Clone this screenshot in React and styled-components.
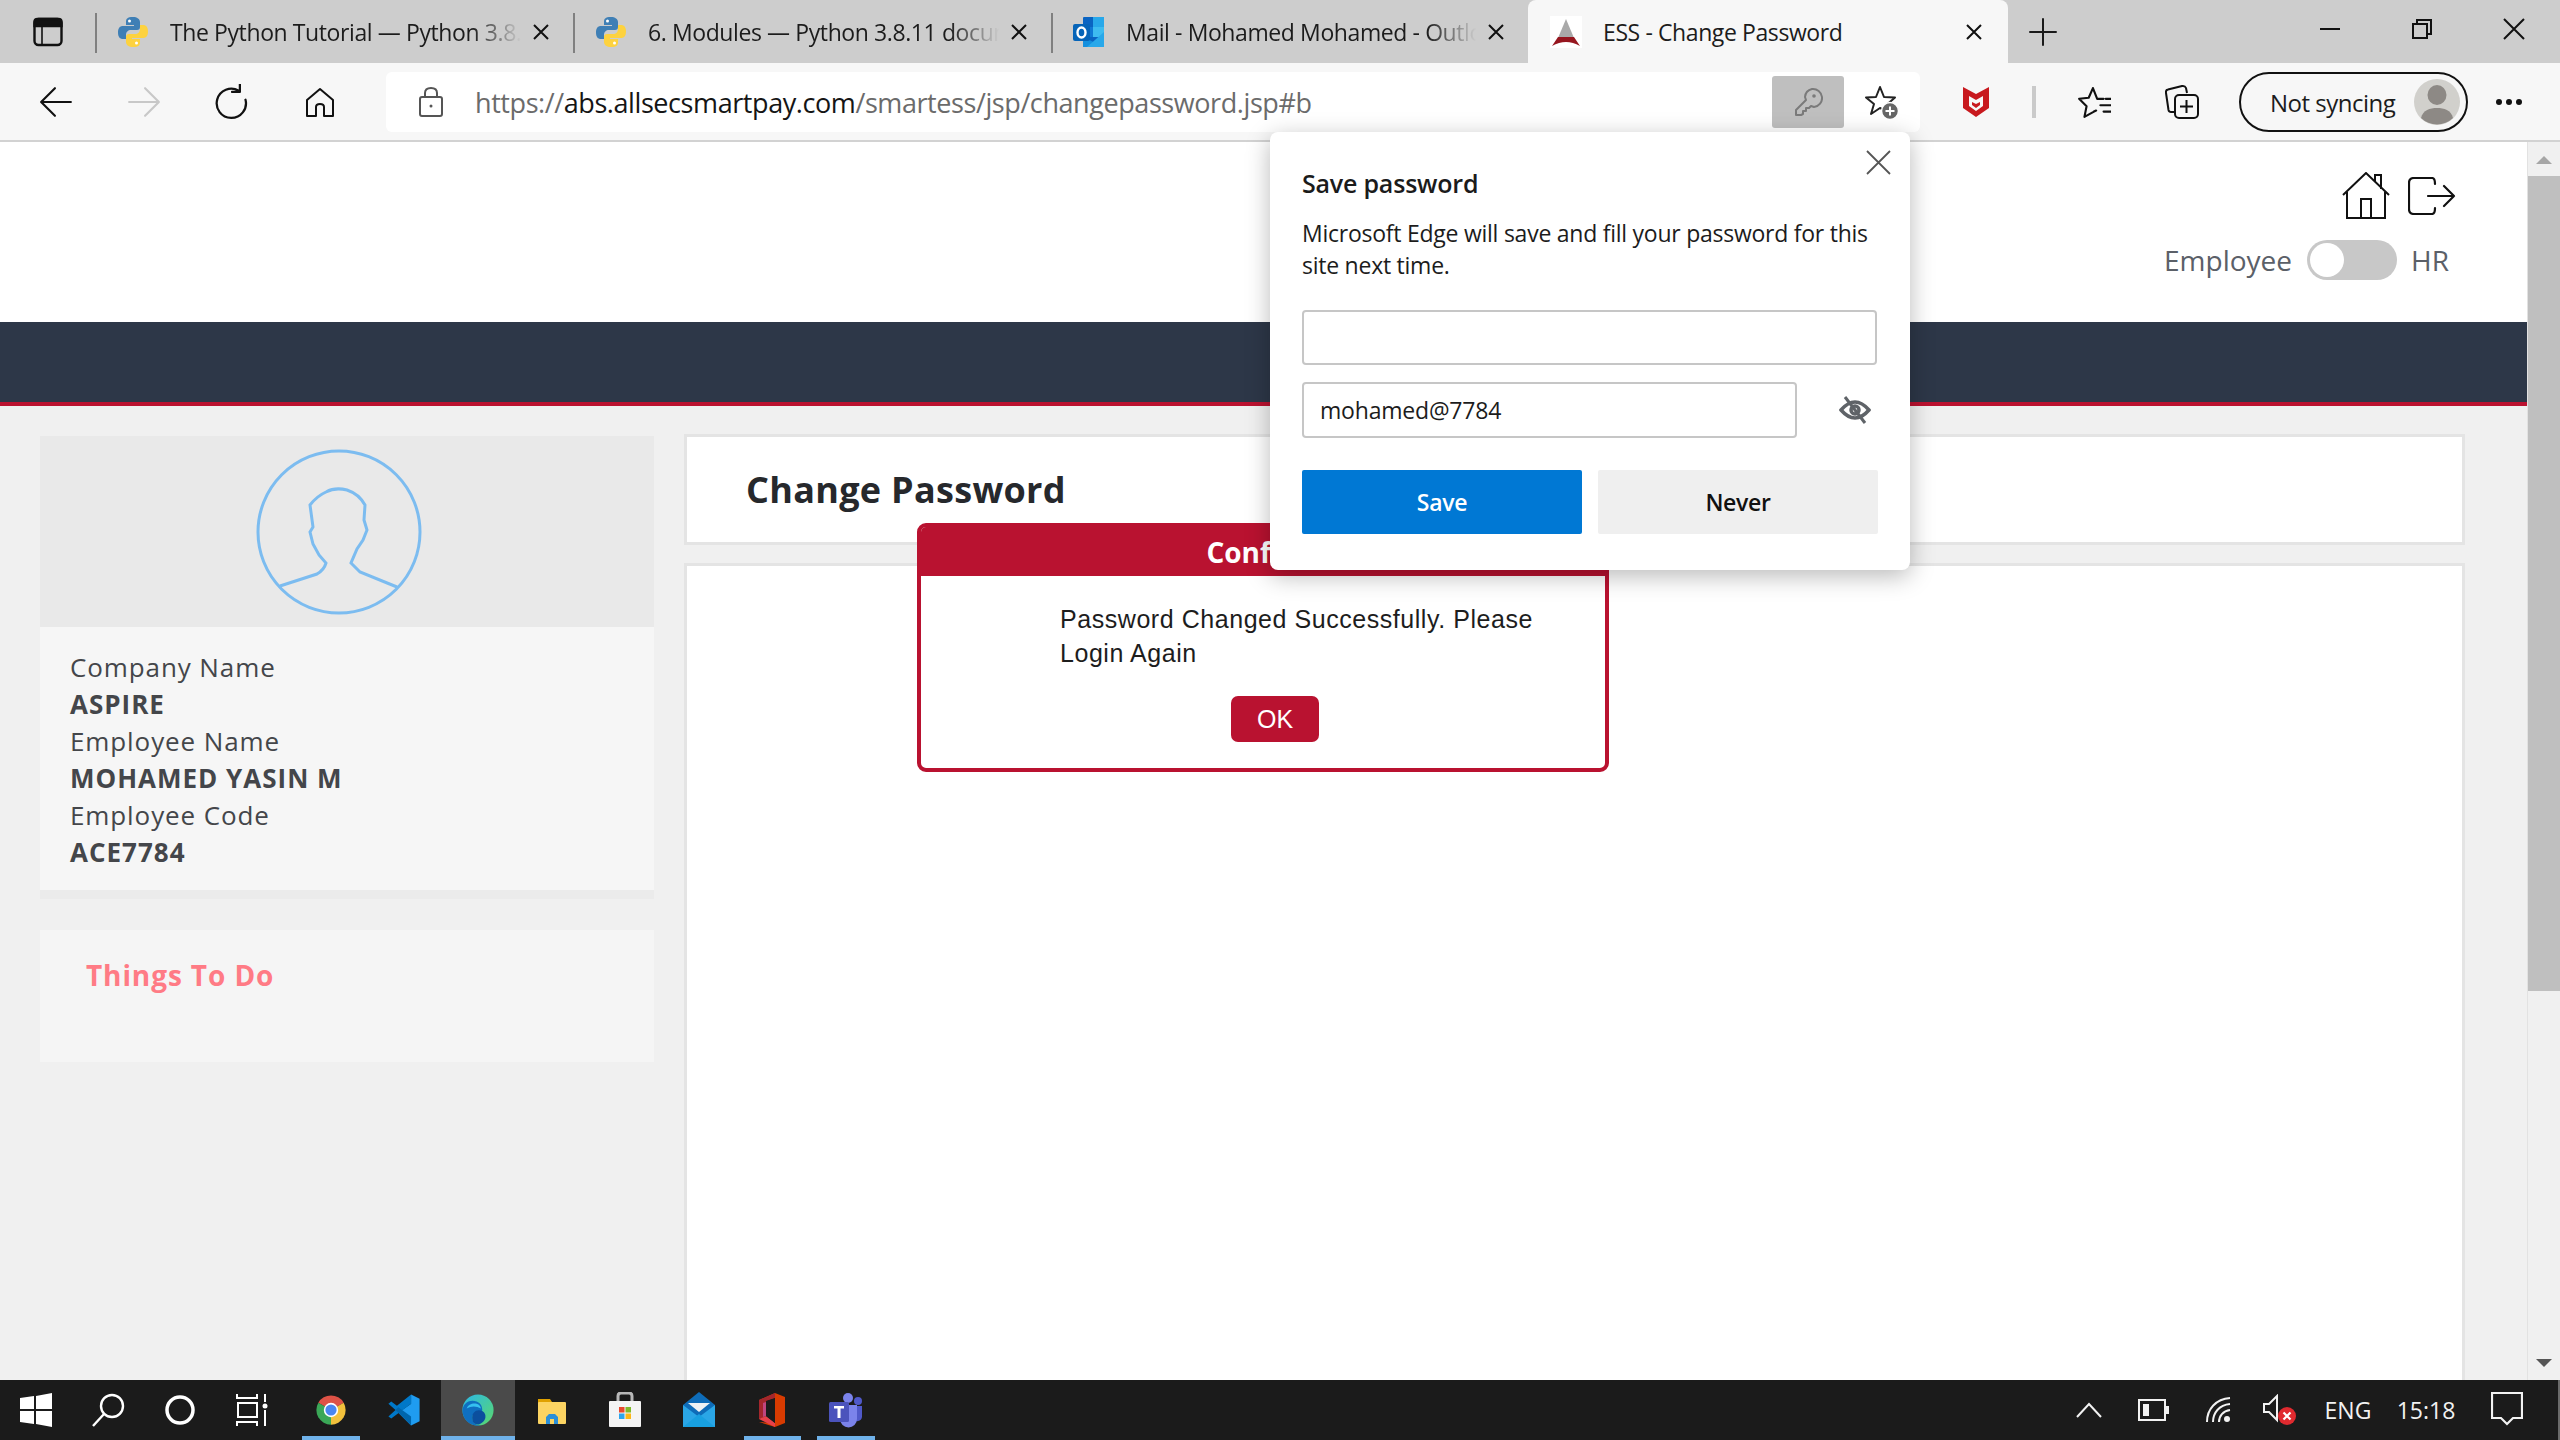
import React from 'react'
import styled, { createGlobalStyle } from 'styled-components'

const Global = createGlobalStyle`
  html, body { margin: 0; padding: 0; overflow: hidden; background: #f0f0f0; }
  * { box-sizing: border-box; }
`

const Screen = styled.div`
  position: relative;
  width: 2560px;
  height: 1440px;
  display: flex;
  flex-direction: column;
  overflow: hidden;
  font-family: "Open Sans", "Liberation Sans", sans-serif;
`

/* ---- browser tabs ---- */
const TabStrip = styled.div`
  height: 63px;
  flex: none;
  display: flex;
  background: #cdcdcd;
`
const SideToggle = styled.div`
  width: 95px;
  display: flex;
  align-items: center;
  padding: 0 0 0 33px;
`
const Divider = styled.div`
  width: 2px;
  height: 40px;
  margin-top: 13px;
  flex: none;
  background: #808080;
`
const Tab = styled.div`
  width: ${p => p.$width}px;
  flex: none;
  display: flex;
  align-items: center;
  padding: 0 ${p => (p.$active ? 26 : 24)}px 0 ${p => (p.$active ? 22 : 20)}px;
  background: ${p => (p.$active ? '#f7f7f7' : 'transparent')};
  border-radius: ${p => (p.$active ? '8px 8px 0 0' : '0')};
`
const Favicon = styled.div`
  width: 32px;
  height: 32px;
  flex: none;
  margin-right: 21px;
  display: flex;
`
const TabTitle = styled.div`
  flex: 1;
  min-width: 0;
  overflow: hidden;
  white-space: nowrap;
  font-size: 23px;
  letter-spacing: -0.4px;
  color: #1c1c1c;
  margin-right: 12px;
  mask-image: ${p => (p.$fade ? 'linear-gradient(to right, #000 86%, transparent 100%)' : 'none')};
`
const TabClose = styled.svg`
  width: 16px;
  height: 16px;
  flex: none;
`
const NewTab = styled.div`
  width: 70px;
  display: flex;
  align-items: center;
  justify-content: center;
`
const WindowButtons = styled.div`
  margin-left: auto;
  display: flex;
  padding-top: 0;
`
const WindowButton = styled.div`
  width: 92px;
  height: 58px;
  display: flex;
  align-items: center;
  justify-content: center;
`

/* ---- toolbar ---- */
const Toolbar = styled.div`
  height: 79px;
  flex: none;
  display: flex;
  align-items: flex-start;
  background: #f7f7f7;
  border-bottom: 2px solid #d2d2d2;
  padding-top: 9px;
`
const ToolSlot = styled.div`
  width: ${p => p.$w}px;
  margin-left: ${p => p.$ml || 0}px;
  height: 60px;
  flex: none;
  display: flex;
  align-items: center;
  justify-content: center;
`
const AddressBar = styled.div`
  width: 1534px;
  height: 60px;
  margin-left: 22px;
  flex: none;
  display: flex;
  align-items: center;
  background: #fff;
  border-radius: 6px;
`
const Lock = styled.div`
  width: 89px;
  flex: none;
  display: flex;
  justify-content: center;
  padding-right: 0;
`
const Url = styled.div`
  flex: 1;
  font-size: 27px;
  letter-spacing: -0.42px;
  color: #6b6b6b;
  white-space: nowrap;
  b { font-weight: 400; color: #151515; }
`
const KeyButton = styled.div`
  width: 72px;
  height: 52px;
  flex: none;
  display: flex;
  align-items: center;
  justify-content: center;
  background: #bfbfbf;
  border-radius: 3px;
`
const StarSlot = styled.div`
  width: 76px;
  flex: none;
  display: flex;
  justify-content: center;
`
const ToolSep = styled.div`
  width: 4px;
  height: 32px;
  margin: 14px 0 0 ${p => p.$ml}px;
  flex: none;
  background: #cacaca;
`
const SyncPill = styled.div`
  width: 229px;
  height: 60px;
  margin-left: 13px;
  flex: none;
  display: flex;
  align-items: center;
  justify-content: space-between;
  padding: 0 6px 0 29px;
  border: 2.5px solid #111;
  border-radius: 30px;
  font-size: 24px;
  letter-spacing: -0.5px;
  color: #1c1c1c;
`
const AvatarDot = styled.div`
  width: 46px;
  height: 46px;
  display: flex;
`

/* ---- page ---- */
const Viewport = styled.div`
  flex: 1;
  min-height: 0;
  display: flex;
`
const Page = styled.div`
  flex: 1;
  min-width: 0;
  display: flex;
  flex-direction: column;
  background: #f0f0f0;
`
const PageHead = styled.div`
  height: 180px;
  flex: none;
  background: #fff;
  display: flex;
  flex-direction: column;
  align-items: flex-end;
`
const HeadIcons = styled.div`
  display: flex;
  align-items: center;
  gap: 18px;
  padding: 30px 71px 0 0;
`
const RoleRow = styled.div`
  display: flex;
  align-items: center;
  padding: 21px 78px 0 0;
  font-size: 28px;
  color: #5b6068;
`
const RoleSwitch = styled.div`
  width: 90px;
  height: 40px;
  margin: 0 14px 0 15px;
  padding: 3px;
  background: #c8c8c8;
  border-radius: 20px;
  &::before {
    content: '';
    display: block;
    width: 34px;
    height: 34px;
    border-radius: 50%;
    background: #fff;
  }
`
const NavBand = styled.div`
  height: 84px;
  flex: none;
  background: #2d3748;
  border-bottom: 4px solid #bb1230;
`
const Content = styled.div`
  position: relative;
  flex: 1;
  min-height: 0;
  display: flex;
  gap: 30px;
  padding: 28px 62px 0 40px;
`
const Sidebar = styled.div`
  width: 614px;
  flex: none;
  margin-top: 2px;
  display: flex;
  flex-direction: column;
`
const PhotoBox = styled.div`
  height: 191px;
  display: flex;
  align-items: center;
  justify-content: center;
  padding-right: 16px;
  background: #e9e9e9;
`
const InfoBox = styled.div`
  height: 272px;
  padding: 22px 30px 0;
  background: #f6f6f6;
  border-bottom: 9px solid #ebebeb;
  color: #44464a;
`
const InfoLabel = styled.div`
  height: 37px;
  line-height: 37px;
  font-size: 26px;
  letter-spacing: 0.9px;
`
const InfoValue = styled(InfoLabel)`
  font-weight: 700;
  letter-spacing: 1px;
`
const TodoBox = styled.div`
  height: 132px;
  margin-top: 31px;
  padding: 25px 46px;
  background: #f5f5f5;
  font-size: 28px;
  line-height: 40px;
  font-weight: 700;
  letter-spacing: 0.9px;
  color: #ff7b85;
`
const MainColumn = styled.div`
  flex: 1;
  min-width: 0;
  display: flex;
  flex-direction: column;
  gap: 18px;
`
const TitlePanel = styled.div`
  height: 111px;
  flex: none;
  display: flex;
  align-items: center;
  padding: 0 0 0 59px;
  background: #fff;
  border: 3px solid #e4e4e4;
`
const PageTitle = styled.h1`
  margin: 0;
  font-size: 36px;
  font-weight: 700;
  letter-spacing: 0.3px;
  color: #26282c;
`
const BodyPanel = styled.div`
  flex: 1;
  background: #fff;
  border: 3px solid #e4e4e4;
  border-bottom: 0;
`

/* ---- site dialog ---- */
const Dialog = styled.div`
  position: absolute;
  left: 917px;
  top: 117px;
  width: 692px;
  height: 249px;
  display: flex;
  flex-direction: column;
  background: #fff;
  border: 4px solid #b91230;
  border-radius: 9px;
  overflow: hidden;
`
const DialogHead = styled.div`
  height: 49px;
  flex: none;
  display: flex;
  align-items: center;
  justify-content: center;
  background: #b91230;
  color: #fff;
  font-size: 28px;
  font-weight: 700;
`
const DialogText = styled.div`
  padding: 26px 60px 0 139px;
  font-family: "Liberation Sans", Arial, sans-serif;
  font-size: 25px;
  line-height: 34px;
  letter-spacing: 0.55px;
  color: #1d1d1d;
`
const DialogOk = styled.div`
  width: 88px;
  height: 46px;
  margin: 26px 0 0 310px;
  display: flex;
  align-items: center;
  justify-content: center;
  background: #b91230;
  border-radius: 7px;
  color: #fff;
  font-family: "Liberation Sans", Arial, sans-serif;
  font-size: 25px;
`

/* ---- save password bubble ---- */
const Bubble = styled.div`
  position: absolute;
  left: 1270px;
  top: 132px;
  width: 640px;
  height: 438px;
  padding: 32px 32px 0;
  background: #fff;
  border-radius: 8px;
  box-shadow: 0 6px 24px rgba(0, 0, 0, 0.28);
  color: #1c1c1c;
`
const BubbleClose = styled.svg`
  position: absolute;
  right: 19px;
  top: 18px;
  width: 25px;
  height: 25px;
`
const BubbleTitle = styled.div`
  font-size: 25px;
  line-height: 38px;
  font-weight: 600;
  letter-spacing: -0.2px;
  color: #1b1b1b;
`
const BubbleText = styled.div`
  margin-top: 15px;
  font-size: 23px;
  line-height: 32px;
  letter-spacing: -0.25px;
`
const FieldRow = styled.div`
  display: flex;
  align-items: center;
  margin-top: ${p => p.$mt}px;
`
const Field = styled.div`
  width: ${p => p.$w}px;
  height: ${p => p.$h}px;
  flex: none;
  display: flex;
  align-items: center;
  padding: 0 16px;
  border: 2px solid #c6c6c6;
  border-radius: 4px;
  font-size: 23px;
  letter-spacing: -0.2px;
`
const EyeSlot = styled.div`
  flex: 1;
  display: flex;
  justify-content: flex-end;
  padding-right: 7px;
`
const BubbleButtons = styled.div`
  display: flex;
  gap: 16px;
  margin-top: 32px;
`
const BubbleButton = styled.div`
  width: 280px;
  height: 64px;
  display: flex;
  align-items: center;
  justify-content: center;
  border-radius: 2px;
  font-size: 23px;
  font-weight: 600;
  letter-spacing: -0.3px;
  background: ${p => (p.$primary ? '#0078d4' : '#efefef')};
  color: ${p => (p.$primary ? '#fff' : '#111')};
`

/* ---- page scrollbar ---- */
const ScrollTrack = styled.div`
  width: 33px;
  flex: none;
  display: flex;
  flex-direction: column;
  align-items: flex-end;
  background: #f0f0f0;
  border-left: 1px solid #e2e2e2;
`
const ScrollArrow = styled.div`
  width: 32px;
  height: ${p => p.$h}px;
  display: flex;
  justify-content: center;
  align-items: ${p => (p.$down ? 'flex-end' : 'flex-start')};
  padding: ${p => (p.$down ? '0 0 13px' : '14px 0 0')};
  margin-top: ${p => (p.$down ? 'auto' : '0')};
  &::before {
    content: '';
    border-left: 8px solid transparent;
    border-right: 8px solid transparent;
    ${p => (p.$down ? 'border-top: 8px solid #555;' : 'border-bottom: 8px solid #a6a6a6;')}
  }
`
const ScrollThumb = styled.div`
  width: 32px;
  height: 815px;
  background: #bfbfbf;
`

/* ---- taskbar ---- */
const Taskbar = styled.div`
  height: 60px;
  flex: none;
  display: flex;
  align-items: stretch;
  background: #1b1b1b;
  color: #f2f2f2;
`
const TaskCell = styled.div`
  position: relative;
  width: ${p => p.$w || 73.6}px;
  flex: none;
  display: flex;
  align-items: center;
  justify-content: center;
  background: ${p => (p.$active ? '#4a4a4a' : 'transparent')};
  ${p => p.$running && `
    &::after {
      content: '';
      position: absolute;
      bottom: 0;
      left: ${p.$active ? 0 : 8}px;
      right: ${p.$active ? 0 : 8}px;
      height: 4px;
      background: #6fb2ea;
    }
  `}
`
const TaskGap = styled.div`
  width: 6px;
  flex: none;
`
const Tray = styled.div`
  margin-left: auto;
  display: flex;
  align-items: center;
`
const TraySlot = styled.div`
  width: ${p => p.$w}px;
  flex: none;
  display: flex;
  align-items: center;
  justify-content: center;
  font-size: 23px;
`
const TrayEdge = styled.div`
  width: 2px;
  height: 60px;
  margin-left: 9px;
  background: #6a6a6a;
`

const Line = ({ d, size = 32, box = 32, color = '#111', width = 2 }) => (
  <svg width={size} height={size} viewBox={`0 0 ${box} ${box}`} fill="none" stroke={color} strokeWidth={width} strokeLinejoin="round" strokeLinecap="round">
    <path d={d} />
  </svg>
)

const PythonIcon = () => (
  <svg width="32" height="32" viewBox="0 0 32 32">
    <path d="M16 1c-6 0-7 2-7 5v3h8v1H6c-3 0-5 2-5 6.500S3 23 6 23h3v-4c0-3 2-5 5-5h6c2 0 3-1 3-3V6c0-3-3-5-7-5z" fill="#3f7fb5" />
    <path d="M16 31c6 0 7-2 7-5v-3h-8v-1h11c3 0 5-2 5-6.500S29 9 26 9h-3v4c0 3-2 5-5 5h-6c-2 0-3 1-3 3v5c0 3 3 5 7 5z" fill="#fdd23f" />
    <circle cx="12.500" cy="5" r="1.500" fill="#fff" />
    <circle cx="19.500" cy="27" r="1.500" fill="#fff" />
  </svg>
)

const OutlookIcon = () => (
  <svg width="32" height="32" viewBox="0 0 32 32">
    <rect x="10" y="1" width="21" height="30" rx="1" fill="#0a64c2" />
    <rect x="20" y="1" width="11" height="10" fill="#28a8ea" />
    <path d="M10 11h10v10H10z" fill="#0f78d4" />
    <path d="M20 11h11v10H20z" fill="#50d9ff" opacity="0.75" />
    <path d="M10 21l21 10H11a1 1 0 0 1-1-1z" fill="#1490df" />
    <path d="M31 16v15H14z" fill="#28a8ea" />
    <rect x="0" y="8" width="17" height="17" rx="2" fill="#0664b8" />
    <ellipse cx="8.500" cy="16.500" rx="4" ry="5" fill="none" stroke="#fff" strokeWidth="2.400" />
  </svg>
)

const EssIcon = () => (
  <svg width="32" height="32" viewBox="0 0 32 32">
    <rect width="32" height="32" fill="#fff" />
    <path d="M16 3l8 19H8z" fill="#a9a9a9" />
    <path d="M8 21h16l6 9q-7-4-14-4t-14 4z" fill="#96161f" />
  </svg>
)

const ChromeIcon = () => (
  <svg width="32" height="32" viewBox="0 0 24 24">
    <path d="M12 12L2.500 6.500A11 11 0 0 1 21.500 6.500z" fill="#de5246" />
    <path d="M12 12L21.500 6.500A11 11 0 0 1 12 23z" fill="#f2c13c" />
    <path d="M12 12L12 23A11 11 0 0 1 2.500 6.500z" fill="#3aa757" />
    <circle cx="12" cy="12" r="5.400" fill="#fff" />
    <circle cx="12" cy="12" r="4.200" fill="#4a86f0" />
  </svg>
)

const VsCodeIcon = () => (
  <svg width="34" height="34" viewBox="0 0 24 24">
    <path d="M17 1l6 3v16l-6 3-9-9 9-6.500z" fill="#1f9cf0" />
    <path d="M17 1v6.500L7 15 3 18 1 16.500 6 12 1 7.500 3 6l4 3z" fill="#0078c8" />
    <path d="M17 23v-6.500L8 10 6 12l3 3z" fill="#0066ad" />
  </svg>
)

const EdgeIcon = () => (
  <svg width="34" height="34" viewBox="0 0 24 24">
    <defs>
      <linearGradient id="edgeTop" x1="0" y1="0" x2="1" y2="1">
        <stop offset="0" stopColor="#2bb7e8" />
        <stop offset="1" stopColor="#5bd96a" />
      </linearGradient>
    </defs>
    <circle cx="12" cy="12" r="11" fill="url(#edgeTop)" />
    <path d="M1 12C2 6 7 4.500 11 6c3 1 4 3.500 4 6 0 1-1 2-3 2-4 0-5 3-3.500 6 1 2 3 3 5.500 3C8 24 1 20 1 12z" fill="#0f6fc0" />
    <path d="M9 14c2-3 7-2 8 1 1 3-1 6-4 7-2 .6-4.500-.5-5-3-.3-2 0-4 1-5z" fill="#0b4f9e" />
    <path d="M4 11c1-3 4-4 7-3.500 2 .4 3 2 3 3.500-3-2-7-2-10 0z" fill="#35c1f0" />
  </svg>
)

const FolderIcon = () => (
  <svg width="32" height="32" viewBox="0 0 32 32">
    <path d="M2 5h12l2 3v4H2z" fill="#e0a100" />
    <rect x="2" y="8" width="28" height="22" rx="1" fill="#fcd462" />
    <path d="M10 30v-7l3-3h6l3 3v7h-4v-5h-4v5z" fill="#2b8fd8" />
  </svg>
)

const StoreIcon = () => (
  <svg width="34" height="36" viewBox="0 0 34 36">
    <path d="M10 10V4q0-3 3-3h8q3 0 3 3v6" fill="none" stroke="#b8b8b8" strokeWidth="3" />
    <rect x="1" y="9" width="32" height="26" rx="1" fill="#f4f4f4" />
    <rect x="11" y="15" width="5.500" height="5.500" fill="#e8492e" />
    <rect x="17.500" y="15" width="5.500" height="5.500" fill="#7fba2a" />
    <rect x="11" y="21.500" width="5.500" height="5.500" fill="#2ca5ec" />
    <rect x="17.500" y="21.500" width="5.500" height="5.500" fill="#fbb718" />
  </svg>
)

const MailIcon = () => (
  <svg width="34" height="36" viewBox="0 0 34 36">
    <path d="M17 0L1 13v22h32V13z" fill="#0e6cb8" />
    <path d="M1 13l16 12 16-12v22H1z" fill="#2aa6e6" />
    <path d="M6 11h22l-11 9z" fill="#eef2f4" />
    <path d="M1 35L17 22l16 13z" fill="#18a0e0" />
  </svg>
)

const OfficeIcon = () => (
  <svg width="28" height="36" viewBox="0 0 28 36">
    <path d="M17 1l10 4v26l-10 4-16-5 16 1V6L8 9v15L1 27V8z" fill="#d83b01" />
    <path d="M17 1v5L8 9v15l-7 3V8z" fill="#a4262c" />
    <path d="M1 27l7-3 9 7v4z" fill="#e8404a" />
    <path d="M8 9l9-3v25l-9-7z" fill="#1b1b1b" />
    <path d="M8 10v14l-3 1V11z" fill="#c0457f" />
  </svg>
)

const TeamsIcon = () => (
  <svg width="36" height="36" viewBox="0 0 36 36">
    <circle cx="20" cy="6" r="5" fill="#7b83eb" />
    <circle cx="30" cy="9" r="4" fill="#5059c9" />
    <path d="M25 14h9v11a5 5 0 0 1-9 2z" fill="#5059c9" />
    <path d="M12 13h17v14a8.500 8.500 0 0 1-17 0z" fill="#7b83eb" />
    <rect x="1" y="10" width="20" height="20" rx="1.500" fill="#4b53bc" />
    <path d="M6 14h10v2.500h-3.500V26h-3v-9.500H6z" fill="#fff" />
  </svg>
)

const X = ({ color = '#111', width = 2 }) => <path d="M1 1l14 14M15 1L1 15" stroke={color} strokeWidth={width} fill="none" />

const tabs = [
  { width: 476, title: 'The Python Tutorial — Python 3.8.11 documentation', icon: <PythonIcon />, fade: true },
  { width: 476, title: '6. Modules — Python 3.8.11 documentation', icon: <PythonIcon />, fade: true },
  { width: 475, title: 'Mail - Mohamed Mohamed - Outlook', icon: <OutlookIcon />, fade: true },
]

const profile = [
  ['Company Name', 'ASPIRE'],
  ['Employee Name', 'MOHAMED YASIN M'],
  ['Employee Code', 'ACE7784'],
]

export default function App() {
  return (
    <Screen>
      <Global />
      <TabStrip>
        <SideToggle>
          <svg width="30" height="30" viewBox="0 0 30 30" fill="none" stroke="#111" strokeWidth="2.400">
            <rect x="1.500" y="2" width="27" height="26" rx="4" />
            <path d="M1.500 5q0-3 3-3h21q3 0 3 3v4h-27z" fill="#111" />
            <path d="M9 9v19" strokeWidth="1.600" />
          </svg>
        </SideToggle>
        {tabs.map(t => (
          <React.Fragment key={t.title}>
            <Divider />
            <Tab $width={t.width}>
              <Favicon>{t.icon}</Favicon>
              <TabTitle $fade={t.fade}>{t.title}</TabTitle>
              <TabClose viewBox="0 0 16 16"><X /></TabClose>
            </Tab>
          </React.Fragment>
        ))}
        <Tab $width={480} $active>
          <Favicon>
            <EssIcon />
          </Favicon>
          <TabTitle>ESS - Change Password</TabTitle>
          <TabClose viewBox="0 0 16 16"><X /></TabClose>
        </Tab>
        <NewTab>
          <Line d="M14 1v26M1 14h26" size={28} box={28} width={2} color="#1a1a1a" />
        </NewTab>
        <WindowButtons>
          <WindowButton>
            <svg width="20" height="4" viewBox="0 0 20 4"><path d="M0 2h20" stroke="#111" strokeWidth="2" /></svg>
          </WindowButton>
          <WindowButton>
            <svg width="20" height="20" viewBox="0 0 20 20" fill="none" stroke="#111" strokeWidth="2">
              <rect x="1" y="5" width="14" height="14" />
              <path d="M5 5V1h14v14h-4" />
            </svg>
          </WindowButton>
          <WindowButton>
            <svg width="22" height="22" viewBox="0 0 22 22"><path d="M1 1l20 20M21 1L1 21" stroke="#111" strokeWidth="2" /></svg>
          </WindowButton>
        </WindowButtons>
      </TabStrip>

      <Toolbar>
        <ToolSlot $w={88} $ml={12}>
          <Line d="M30 16H3M15 3L2 16l13 13" size={34} />
        </ToolSlot>
        <ToolSlot $w={88}>
          <Line d="M2 16h27M17 3l13 13-13 13" size={34} color="#c8c8c8" />
        </ToolSlot>
        <ToolSlot $w={88}>
          <Line d="M22 6a13 13 0 1 0 6 8M23 0v7h-7" size={36} />
        </ToolSlot>
        <ToolSlot $w={88}>
          <Line d="M16 3L3 14v16h9v-9q0-3 4-3t4 3v9h9V14z" size={32} />
        </ToolSlot>
        <AddressBar>
          <Lock>
            <svg width="26" height="32" viewBox="0 0 26 32" fill="none" stroke="#555" strokeWidth="2">
              <rect x="2" y="11" width="22" height="19" rx="2" />
              <path d="M7 11V7q0-5 6-5t6 5v4" />
              <circle cx="13" cy="20" r="1.500" fill="#555" stroke="none" />
            </svg>
          </Lock>
          <Url>https://<b>abs.allsecsmartpay.com</b>/smartess/jsp/changepassword.jsp#b</Url>
          <KeyButton>
            <svg width="30" height="30" viewBox="0 0 30 30" fill="none" stroke="#7a7a7a" strokeWidth="2" strokeLinejoin="round">
              <path d="M19 2a9 9 0 0 1 2 18l-3-1-2 2h-3v3h-3v3l-2 1H3v-5l10-10-1-3a9 9 0 0 1 7-8z" />
              <circle cx="21" cy="9" r="1.800" fill="#7a7a7a" stroke="none" />
            </svg>
          </KeyButton>
          <StarSlot>
            <svg width="36" height="36" viewBox="0 0 36 36">
              <path d="M16 3l4 10 11 .5-8 7 2.500 8-9.500-4.500L7 30l3-10-8-6.500 10-.5z" fill="none" stroke="#222" strokeWidth="2" strokeLinejoin="round" />
              <circle cx="26" cy="27" r="8.500" fill="#666" stroke="#fff" strokeWidth="1.500" />
              <path d="M26 22.500v9M21.500 27h9" stroke="#fff" strokeWidth="2" />
            </svg>
          </StarSlot>
        </AddressBar>
        <ToolSlot $w={56} $ml={28}>
          <svg width="26" height="32" viewBox="0 0 26 32">
            <path d="M0 1l13 7 13-7v21l-13 9-13-9z" fill="#c8191e" />
            <path d="M6 10l7 4 7-4v10l-7 5-7-5z" fill="#f7f7f7" />
            <path d="M9 16l4 2 4-2v3l-4 3-4-3z" fill="#c8191e" />
          </svg>
        </ToolSlot>
        <ToolSep $ml={28} />
        <ToolSlot $w={88} $ml={14}>
          <Line d="M15 3l4 10 6 0M27 13h5M25 19h7M25 25h7M15 3l-4 9-9 1 7 7-2 10 9-5M25 19h-3M16 25l2-1" size={34} />
        </ToolSlot>
        <ToolSlot $w={88}>
          <svg width="34" height="36" viewBox="0 0 34 36" fill="none" stroke="#111" strokeWidth="2">
            <path d="M10 28H6q-2 0-2.500-2L1 9q-.5-3 2-3.500L17 2q3-.5 4 2l1 5" />
            <rect x="10" y="11" width="23" height="23" rx="4" />
            <path d="M21.500 16v13M15 22.500h13" />
          </svg>
        </ToolSlot>
        <SyncPill>
          Not syncing
          <AvatarDot>
            <svg width="46" height="46" viewBox="0 0 46 46">
              <circle cx="23" cy="23" r="23" fill="#d1d0cc" />
              <ellipse cx="23" cy="16" rx="9.500" ry="10" fill="#8d8985" />
              <path d="M7 39c2-8 9-10 16-10s14 2 16 10a23 23 0 0 1-32 0z" fill="#8d8985" />
            </svg>
          </AvatarDot>
        </SyncPill>
        <ToolSlot $w={82}>
          <svg width="28" height="8" viewBox="0 0 28 8" fill="#111">
            <circle cx="4" cy="4" r="3" />
            <circle cx="14" cy="4" r="3" />
            <circle cx="24" cy="4" r="3" />
          </svg>
        </ToolSlot>
      </Toolbar>

      <Viewport>
        <Page>
          <PageHead>
            <HeadIcons>
              <svg width="48" height="47" viewBox="0 0 48 47" fill="none" stroke="#111" strokeWidth="2">
                <path d="M1 23L24 1l23 22M5 20v26h38V20M33 10V3h6v14M19 46V27h10v19" />
              </svg>
              <svg width="48" height="38" viewBox="0 0 48 38" fill="none" stroke="#111" strokeWidth="2.200" strokeLinecap="round" strokeLinejoin="round">
                <path d="M24 1H6Q1 1 1 6v26q0 5 5 5h18q3 0 3-6M24 1q3 0 3 6M20 19h26M36 9l10 10-10 10" />
              </svg>
            </HeadIcons>
            <RoleRow>
              Employee
              <RoleSwitch />
              HR
            </RoleRow>
          </PageHead>
          <NavBand />
          <Content>
            <Sidebar>
              <PhotoBox>
                <svg width="168" height="168" viewBox="-84 -84 168 168" fill="none" stroke="#7cbcf0" strokeWidth="3">
                  <circle r="81" />
                  <path d="M-59 54L-22 42Q-15 38-13 31L-20 23-26 12-29 0-26-5-29-27Q-22-36-13-40Q-4-45 8-42Q20-38 26-27L25-12 28-2 24 8 18 17 12 31 21 40 58 55" />
                </svg>
              </PhotoBox>
              <InfoBox>
                {profile.map(([label, value]) => (
                  <React.Fragment key={label}>
                    <InfoLabel>{label}</InfoLabel>
                    <InfoValue>{value}</InfoValue>
                  </React.Fragment>
                ))}
              </InfoBox>
              <TodoBox>Things To Do</TodoBox>
            </Sidebar>
            <MainColumn>
              <TitlePanel>
                <PageTitle>Change Password</PageTitle>
              </TitlePanel>
              <BodyPanel />
            </MainColumn>
            <Dialog>
              <DialogHead>Confirm</DialogHead>
              <DialogText>Password Changed Successfully. Please Login Again</DialogText>
              <DialogOk>OK</DialogOk>
            </Dialog>
          </Content>
        </Page>
        <ScrollTrack>
          <ScrollArrow $h={34} />
          <ScrollThumb />
          <ScrollArrow $h={60} $down />
        </ScrollTrack>
      </Viewport>

      <Taskbar>
        <TaskCell $w={72}>
          <svg width="34" height="34" viewBox="0 0 34 34" fill="#fff">
            <path d="M1 5l14-2v13H1zM17 3l16-3v16H17zM1 18h14v13L1 29zM17 18h16v16l-16-3z" />
          </svg>
        </TaskCell>
        <TaskCell $w={72}>
          <svg width="34" height="34" viewBox="0 0 34 34" fill="none" stroke="#fff" strokeWidth="2.400">
            <circle cx="21" cy="13" r="11" />
            <path d="M13 21L2 33" />
          </svg>
        </TaskCell>
        <TaskCell $w={72}>
          <svg width="32" height="32" viewBox="0 0 32 32" fill="none" stroke="#fff" strokeWidth="3.500">
            <circle cx="16" cy="16" r="13" />
          </svg>
        </TaskCell>
        <TaskCell $w={72}>
          <svg width="32" height="32" viewBox="0 0 32 32" fill="none" stroke="#fff" strokeWidth="2">
            <path d="M1 0v4h20V0M1 32v-4h20v4M2 9h19v14H2zM29 0v8M29 16v16" />
            <circle cx="29" cy="12" r="2.500" fill="#fff" stroke="none" />
          </svg>
        </TaskCell>
        <TaskGap />
        <TaskCell $running><ChromeIcon /></TaskCell>
        <TaskCell><VsCodeIcon /></TaskCell>
        <TaskCell $active $running><EdgeIcon /></TaskCell>
        <TaskCell><FolderIcon /></TaskCell>
        <TaskCell><StoreIcon /></TaskCell>
        <TaskCell><MailIcon /></TaskCell>
        <TaskCell $running><OfficeIcon /></TaskCell>
        <TaskCell $running><TeamsIcon /></TaskCell>
        <Tray>
          <TraySlot $w={66}>
            <svg width="26" height="16" viewBox="0 0 26 16" fill="none" stroke="#f2f2f2" strokeWidth="2"><path d="M1 15L13 2l12 13" /></svg>
          </TraySlot>
          <TraySlot $w={64}>
            <svg width="32" height="22" viewBox="0 0 32 22">
              <rect x="1" y="1" width="26" height="20" fill="none" stroke="#f2f2f2" strokeWidth="2" />
              <rect x="5" y="5" width="6" height="12" fill="#f2f2f2" />
              <rect x="28" y="7" width="3" height="8" fill="#f2f2f2" />
            </svg>
          </TraySlot>
          <TraySlot $w={66}>
            <svg width="26" height="26" viewBox="0 0 26 26" fill="none" stroke="#f2f2f2" strokeWidth="2">
              <path d="M1 25C1 12 10 2 24 1M7 25C7 16 13 8 24 7M13 25c0-6 4-11 11-12" />
              <circle cx="21" cy="22" r="3" fill="#f2f2f2" stroke="none" />
            </svg>
          </TraySlot>
          <TraySlot $w={56}>
            <svg width="34" height="32" viewBox="0 0 34 32">
              <path d="M1 10h5l8-8v24l-8-8H1z" fill="none" stroke="#f2f2f2" strokeWidth="2" />
              <circle cx="24" cy="22" r="9" fill="#e02a2f" />
              <path d="M20.500 18.500l7 7M27.500 18.500l-7 7" stroke="#fff" strokeWidth="2.200" />
            </svg>
          </TraySlot>
          <TraySlot $w={80}>ENG</TraySlot>
          <TraySlot $w={76}>15:18</TraySlot>
          <TraySlot $w={85}>
            <svg width="32" height="36" viewBox="0 0 32 36" fill="none" stroke="#f2f2f2" strokeWidth="2.200">
              <path d="M1 1h30v25H22l-6 6-6-6H1z" />
            </svg>
          </TraySlot>
          <TrayEdge />
        </Tray>
      </Taskbar>

      <Bubble>
        <BubbleClose viewBox="0 0 25 25"><path d="M1 1l23 23M24 1L1 24" stroke="#555" strokeWidth="1.800" /></BubbleClose>
        <BubbleTitle>Save password</BubbleTitle>
        <BubbleText>Microsoft Edge will save and fill your password for this site next time.</BubbleText>
        <FieldRow $mt={29}>
          <Field $w={575} $h={55} />
        </FieldRow>
        <FieldRow $mt={17}>
          <Field $w={495} $h={56}>mohamed@7784</Field>
          <EyeSlot>
            <svg width="32" height="28" viewBox="0 0 32 28" fill="none" stroke="#5f6368" strokeWidth="3.500">
              <path d="M2 14q14-16 28 0-14 16-28 0z" />
              <circle cx="16" cy="14" r="4" />
              <path d="M6 1l20 26" stroke="#5f6368" strokeWidth="3" />
            </svg>
          </EyeSlot>
        </FieldRow>
        <BubbleButtons>
          <BubbleButton $primary>Save</BubbleButton>
          <BubbleButton>Never</BubbleButton>
        </BubbleButtons>
      </Bubble>
    </Screen>
  )
}
